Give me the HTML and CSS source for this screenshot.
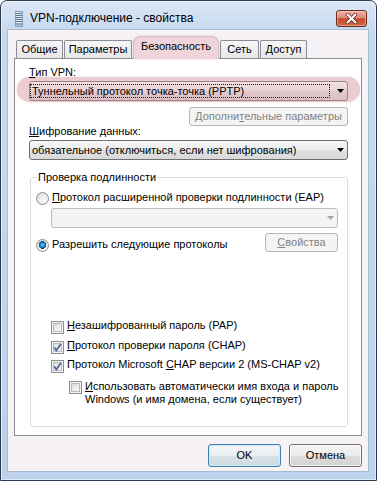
FILE: index.html
```html
<!DOCTYPE html>
<html>
<head>
<meta charset="utf-8">
<link rel="stylesheet" href="styles.css">
</head>
<body>
<div class="window">
  <div class="titlebar">
    <svg class="ticon" width="8" height="16" viewBox="0 0 8 16">
      <rect x="0.5" y="0.5" width="7" height="15" fill="#e3e9f0" stroke="#8c9cb0"/>
      <path d="M1 2.5h6M1 4.5h6M1 6.5h6M1 8.5h6M1 10.5h6" stroke="#5f7594" stroke-width="1"/>
      <rect x="1" y="12" width="6" height="2.5" fill="#86a7cc"/>
    </svg>
    <span class="title">VPN-подключение - свойства</span>
    <div class="close">
      <svg width="13" height="11" viewBox="0 0 13 11">
        <path d="M2.5 1.5 L10.5 9.5 M10.5 1.5 L2.5 9.5" stroke="#6a2b22" stroke-width="3.6" stroke-linecap="round"/>
        <path d="M2.5 1.5 L10.5 9.5 M10.5 1.5 L2.5 9.5" stroke="#ffffff" stroke-width="2" stroke-linecap="round"/>
      </svg>
    </div>
  </div>
  <div class="client">
    <div class="tabs">
      <div class="tab t1">Общие</div>
      <div class="tab t2">Параметры</div>
      <div class="tab t3 sel">Безопасность</div>
      <div class="tab t4">Сеть</div>
      <div class="tab t5">Доступ</div>
    </div>
    <div class="panel">
      <div class="lbl lbl-vpn"><u>Т</u>ип VPN:</div>
      <div class="hl">
        <div class="combo tinted">
          <span class="cval focus">Туннельный протокол точка-точка (PPTP)</span>
          <span class="arrow"><svg width="7" height="4" viewBox="0 0 7 4"><path d="M0 0H7L3.5 4Z" fill="#000"/></svg></span>
        </div>
      </div>
      <div class="adv-row"><div class="btn disabled adv">Дополни<u>т</u>ельные параметры</div></div>
      <div class="lbl lbl-enc"><u>Ш</u>ифрование данных:</div>
      <div class="combo enc">
        <span class="cval">обязательное (отключиться, если нет шифрования)</span>
        <span class="arrow"><svg width="7" height="4" viewBox="0 0 7 4"><path d="M0 0H7L3.5 4Z" fill="#000"/></svg></span>
      </div>
      <fieldset class="group">
        <legend>Проверка подлинности</legend>
        <div class="gin">
          <div class="radio-row r1"><span class="radio"></span><span><u>П</u>ротокол расширенной проверки подлинности (EAP)</span></div>
          <div class="combo disabled eap">
            <span class="cval"></span>
            <span class="arrow"><svg width="7" height="4" viewBox="0 0 7 4"><path d="M0 0H7L3.5 4Z" fill="#a3a3a3"/></svg></span>
          </div>
          <div class="allow-row">
            <div class="radio-row r2"><span class="radio on"></span><span>Разрешить сле<u>д</u>ующие протоколы</span></div>
            <div class="btn disabled props"><u>С</u>войства</div>
          </div>
          <div class="checks">
            <div class="check-row"><span class="cb"></span><span><u>Н</u>езашифрованный пароль (PAP)</span></div>
            <div class="check-row c2"><span class="cb"><svg width="11" height="11" viewBox="0 0 11 11"><path d="M2.3 5.4 L4.3 8.4 L8.9 1.9" fill="none" stroke="#4b6194" stroke-width="1.7"/></svg></span><span><u>П</u>ротокол проверки пароля (CHAP)</span></div>
            <div class="check-row"><span class="cb"><svg width="11" height="11" viewBox="0 0 11 11"><path d="M2.3 5.4 L4.3 8.4 L8.9 1.9" fill="none" stroke="#4b6194" stroke-width="1.7"/></svg></span><span>Протокол Microsoft <u>C</u>HAP версии 2 (MS-CHAP v2)</span></div>
            <div class="check-row nested"><span class="cb"></span><span class="two"><u>И</u>спользовать автоматически имя входа и пароль<br>Windows (и имя домена, если существует)</span></div>
          </div>
        </div>
      </fieldset>
    </div>
    <div class="buttons">
      <div class="btn big def">OK</div>
      <div class="btn big">Отмена</div>
    </div>
  </div>
</div>
</body>
</html>
```

FILE: styles.css
```css
* { box-sizing: border-box; }
html, body { margin: 0; padding: 0; background: #ffffff; }
body {
  font-family: "Liberation Sans", Arial, sans-serif;
  font-size: 11px;
  color: #000;
}
u { text-decoration: underline; text-underline-offset: 1px; }

.window {
  width: 377px;
  height: 481px;
  border: 1px solid #2c3b4d;
  border-radius: 7px 7px 0 0;
  background: linear-gradient(#dbe7f6 0, #c8daf0 29px, #bcd2ed 100%);
  box-shadow: inset 0 0 0 1px rgba(255, 255, 255, 0.55);
  display: flex;
  flex-direction: column;
}

.titlebar {
  height: 28px;
  flex: none;
  display: flex;
  align-items: flex-start;
  padding-left: 14px;
}
.ticon { margin-top: 10px; flex: none; }
.title {
  font-size: 12px;
  line-height: 15px;
  margin-top: 10px;
  margin-left: 7px;
}
.close {
  margin-left: auto;
  margin-right: 9px;
  margin-top: 9px;
  width: 31px;
  height: 17px;
  border: 1px solid #6b2a20;
  border-radius: 3px;
  background: linear-gradient(#ebb3a6 0, #dc8b78 45%, #c7492e 52%, #d2674f 100%);
  box-shadow: inset 0 0 0 1px rgba(255, 215, 205, 0.45);
  display: flex;
  align-items: center;
  justify-content: center;
}
.close svg { display: block; }

.client {
  flex: 1;
  margin: 0 7px 8px 6px;
  border: 1px solid #a9bbcf;
  background: #f6f2f6;
  padding: 6px 6px 0 6px;
}

.tabs {
  display: flex;
  align-items: flex-end;
  height: 22px;
  padding-left: 2px;
  position: relative;
  z-index: 1;
}
.tab {
  height: 18px;
  line-height: 16px;
  border: 1px solid #898c95;
  border-bottom: 0;
  border-radius: 2px 2px 0 0;
  background: linear-gradient(#f6f6f6, #e6e6e6);
  text-align: center;
  margin-right: 1px;
  white-space: nowrap;
}
.t1 { width: 47px; }
.t2 { width: 68px; }
.t3 { width: 86px; }
.t4 { width: 39px; }
.t5 { width: 47px; }
.tab.sel {
  height: 23px;
  margin-bottom: -1px;
  padding-top: 1px;
  background: #efd5da;
  border-color: #dcbac0;
  border-radius: 8px 8px 0 0;
  box-shadow: 0 0 2px #e9c6cc;
}

.panel {
  height: 378px;
  border: 1px solid #898c95;
  background: #ffffff;
  padding: 0 13px 0 14px;
}
.lbl { line-height: 13px; white-space: nowrap; }
.lbl-vpn { padding-top: 7px; }
.lbl-enc { margin-top: -1px; }

.hl {
  margin: -2px -12px 0 -12px;
  padding: 4px 12px 1px 12px;
  border-radius: 13px;
  background: #edccd1;
  box-shadow: 0 0 2px #edccd1;
}

.combo {
  height: 20px;
  border: 1px solid #707070;
  border-radius: 3px;
  background: linear-gradient(#f6f6f6 0, #ececec 50%, #e1e1e1 51%, #d9d9d9 100%);
  display: flex;
}
.combo.tinted {
  background: linear-gradient(#f2e1e4 0, #e9d3d7 50%, #e1c8cc 51%, #dbc0c5 100%);
  border-color: #9a8287;
}
.combo.enc { margin-top: 2px; }
.combo.disabled {
  border-color: #b7bcbf;
  background: #f4f4f4;
}
.combo.eap { margin: 3px 0 0 15px; }
.cval {
  flex: 1;
  line-height: 18px;
  padding-left: 2px;
  white-space: nowrap;
  overflow: hidden;
}
.cval.focus {
  margin: 2px 0 2px 0;
  border: 1px dotted #1a1a1a;
  line-height: 12px;
  padding-left: 1px;
}
.arrow {
  width: 17px;
  flex: none;
  display: flex;
  align-items: center;
  justify-content: center;
  padding-left: 3px;
}
.arrow svg { display: block; }

.adv-row {
  display: flex;
  justify-content: flex-end;
  margin-top: 5px;
}

.btn {
  border: 1px solid #707070;
  border-radius: 3px;
  background: linear-gradient(#f4f4f4 0, #ececec 50%, #dedede 51%, #d2d2d2 100%);
  box-shadow: inset 0 0 0 1px rgba(255, 255, 255, 0.75);
  text-align: center;
  white-space: nowrap;
}
.btn.disabled {
  border-color: #b2b7ba;
  background: #f4f4f4;
  color: #838383;
  box-shadow: none;
}
.adv { width: 159px; height: 19px; line-height: 17px; }
.props { width: 73px; height: 19px; line-height: 17px; }
.big { width: 73px; height: 23px; line-height: 21px; }
.btn.def {
  border-color: #3c7fb1;
  background: linear-gradient(#f4f7f9 0, #e9eef1 50%, #d9e2e8 51%, #cdd9e1 100%);
  box-shadow: inset 0 0 0 1px #d2ebfa;
}

.group {
  margin: 11px 0 0 1px;
  padding: 0;
  border: 1px solid #d5dfe5;
  border-radius: 3px;
  height: 256px;
  min-width: 0;
}
.group legend {
  margin-left: 6px;
  padding: 0 1px;
  line-height: 13px;
}
.gin { padding: 6px 9px 0 5px; }

.radio-row {
  display: flex;
  align-items: flex-start;
  line-height: 15px;
  white-space: nowrap;
}
.radio {
  width: 13px;
  height: 13px;
  flex: none;
  margin-top: 2px;
  margin-right: 3px;
  border-radius: 50%;
  border: 1px solid #8d8f92;
  background: radial-gradient(circle at 65% 70%, #fbfbfb 0, #eeeeee 40%, #cfd1d4 100%);
}
.radio.on {
  background:
    radial-gradient(circle at 50% 45%, #8fdcff 0, #2a9be0 1.6px, #0e5a96 3.3px, #11446f 3.7px, transparent 4px),
    radial-gradient(circle at 65% 70%, #fbfbfb 0, #eeeeee 40%, #cfd1d4 100%);
}

.allow-row {
  display: flex;
  justify-content: space-between;
  align-items: flex-start;
  margin-top: 5px;
}
.r2 { margin-top: 4px; }

.checks { margin-top: 66px; padding-left: 15px; }
.check-row {
  display: flex;
  align-items: flex-start;
  line-height: 15px;
  height: 20px;
  white-space: nowrap;
}
.check-row.c2 { height: 19px; }
.cb {
  width: 13px;
  height: 13px;
  flex: none;
  margin-top: 3px;
  margin-right: 3px;
  border: 1px solid #8e8f8f;
  background: linear-gradient(135deg, #d3d5d9 0, #eeeff0 60%, #fafafa 100%);
  box-shadow: inset 0 0 0 1px #f3f3f3, inset 0 0 0 2px #b8bcc1;
}
.cb svg { display: block; }
.check-row.nested {
  margin-top: 3px;
  margin-left: 18px;
  height: auto;
  line-height: 13px;
}
.check-row.nested .cb { margin-top: 1px; }

.buttons {
  display: flex;
  justify-content: flex-end;
  gap: 8px;
  margin-top: 8px;
}
```
